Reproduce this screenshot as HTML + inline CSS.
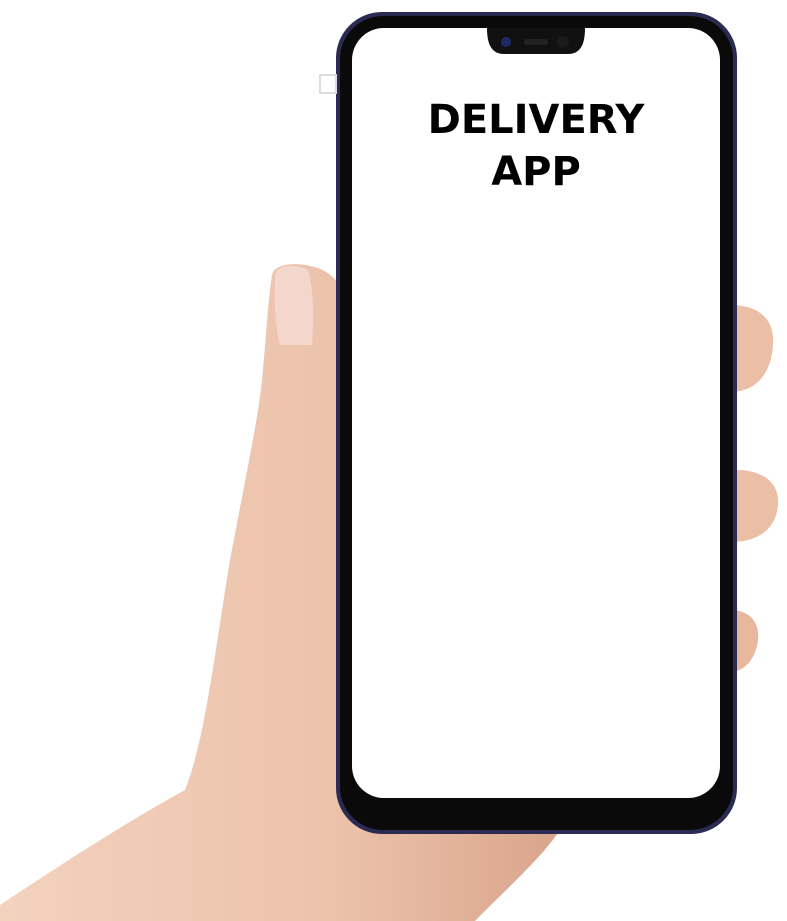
<!DOCTYPE html>
<html><head><style>
html,body{margin:0;padding:0;background:#fff;width:787px;height:921px;overflow:hidden}
.t{position:absolute;left:352px;width:368px;text-align:center;font-family:"DejaVu Sans","Liberation Sans",sans-serif;font-weight:bold;font-size:40px;color:#000;line-height:52px}
</style></head><body>
<svg width="787" height="921" style="position:absolute;left:0;top:0">
<defs>
<linearGradient id="sk" x1="0" x2="1" y1="0" y2="0">
<stop offset="0" stop-color="#f3d2bf"/><stop offset="0.6" stop-color="#ecc2aa"/><stop offset="1" stop-color="#d9a58b"/>
</linearGradient>
</defs>
<path d="M730 305 C760 305 775 320 773 345 C771 375 755 392 730 392 Z" fill="#ebbfa6"/>
<path d="M730 470 C765 468 780 485 778 505 C776 528 760 542 730 542 Z" fill="#ebbfa6"/>
<path d="M730 610 C752 610 760 625 758 640 C756 658 745 672 730 672 Z" fill="#e7b89e"/>
<path d="M272 275 C275 262 300 262 318 268 C340 276 352 300 352 330 L352 820 L560 830 C540 860 500 895 475 921 L0 921 L0 905 C60 865 130 820 185 790 C205 740 215 650 230 560 C245 480 258 420 262 380 C266 340 268 300 272 275 Z" fill="url(#sk)"/>
<path d="M276 272 C280 264 298 264 308 270 C314 290 314 320 312 345 L280 345 C275 325 273 295 276 272 Z" fill="#f4d6cd"/>
<rect x="336" y="12" width="401" height="822" rx="46" fill="#2b2a52"/>
<rect x="340" y="16" width="393" height="814" rx="43" fill="#0a0a0a"/>
<rect x="352" y="28" width="368" height="770" rx="32" fill="#fff"/>
<rect x="352" y="798" width="368" height="6" fill="#0a0a0a"/>
<path d="M487 28 L585 28 C585 45 580 54 568 54 L504 54 C492 54 487 45 487 28 Z" fill="#111"/>
<circle cx="506" cy="42" r="5" fill="#1d2a6a"/>
<rect x="524" y="39" width="24" height="6" rx="3" fill="#222"/>
<circle cx="563" cy="42" r="6" fill="#1a1a1a"/>
<rect x="320" y="75" width="16" height="18" fill="none" stroke="#ddd" stroke-width="2"/>
</svg>
<div class="t" style="top:94px">DELIVERY</div>
<div class="t" style="top:146px">APP</div>
</body></html>
